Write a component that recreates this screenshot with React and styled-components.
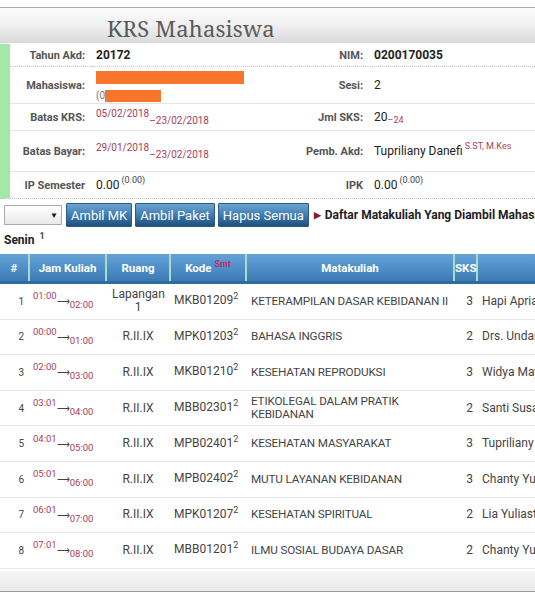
import React from "react";
import styled, { createGlobalStyle } from "styled-components";

const Global = createGlobalStyle`
  html, body { margin: 0; padding: 0; background: #fff; overflow: hidden; }
  body { font-family: Roboto, "Noto Sans", Arial, sans-serif; color: #333; width: 535px; }
`;

const Page = styled.div`
  width: 535px;
  height: 592px;
  overflow: hidden;
  display: flex;
  flex-direction: column;
  & > * { flex-shrink: 0; }
`;

const TitleBar = styled.div`
  margin-top: 7px;
  height: 35px;
  border-top: 1px solid #a8a8a8;
  background: linear-gradient(#fbfbfb 0%, #f1f1f1 45%, #dadada 100%);
  display: flex;
  align-items: center;
  padding-left: 107px;
`;

const Title = styled.h1`
  margin: 0;
  font-family: "Noto Serif", "DejaVu Serif", "Liberation Serif", serif;
  font-weight: 400;
  font-size: 22px;
  color: #5a5a5a;
  letter-spacing: 0.2px;
  position: relative;
  top: 2px;
`;

const Info = styled.div`
  margin-top: 1px;
  border-left: 10px solid #a3e8a6;
  display: grid;
  grid-template-columns: 82px 198px 80px 1fr;
  border-bottom: 1px dotted #bbb;
`;

const Label = styled.div`
  height: ${(p) => p.h}px;
  box-sizing: border-box;
  display: flex;
  align-items: center;
  justify-content: flex-end;
  padding-right: 7px;
  font-size: 11px;
  font-weight: 700;
  color: #555;
  border-bottom: ${(p) => (p.last ? "none" : p.dotted ? "1px dotted #c8c8c8" : "1px solid #e6e6e6")};
`;

const Value = styled.div`
  height: ${(p) => p.h}px;
  box-sizing: border-box;
  display: flex;
  align-items: center;
  padding-left: 4px;
  font-size: 12px;
  font-weight: ${(p) => (p.bold ? 700 : 400)};
  color: #222;
  border-bottom: ${(p) => (p.last ? "none" : p.dotted ? "1px dotted #c8c8c8" : "1px solid #e6e6e6")};
`;

const Red = styled.span`
  color: #a8405a;
  font-size: ${(p) => p.size || 10}px;
  position: relative;
  top: ${(p) => p.shift || 0}px;
`;

const Sup = styled.span`
  font-size: 9px;
  color: ${(p) => p.color || "#444"};
  position: relative;
  top: -5px;
  margin-left: ${(p) => (p.tight ? 0 : 2)}px;
`;

const Redact = styled.div`
  display: flex;
  flex-direction: column;
  gap: 6px;
  padding-top: 2px;
`;

const OrangeBar = styled.div`
  width: ${(p) => p.w}px;
  height: ${(p) => p.hh}px;
  background: #f7762c;
`;

const RedactRow = styled.div`
  display: flex;
  align-items: center;
  font-size: 10px;
  color: #777;
`;

const Toolbar = styled.div`
  margin-top: 4px;
  display: flex;
  align-items: center;
  gap: 3px;
  padding-left: 4px;
  white-space: nowrap;
  & > * { flex-shrink: 0; }
`;

const Select = styled.div`
  width: 53px;
  height: 18px;
  border: 1px solid #aaa;
  background: linear-gradient(#ffffff, #e9e9e9);
  display: flex;
  align-items: center;
  justify-content: flex-end;
  padding-right: 3px;
  font-size: 8px;
  color: #111;
  margin-right: 1px;
`;

const Button = styled.button`
  height: 24px;
  padding: 0 4px;
  border: 1px solid #2a5b85;
  background: linear-gradient(#6ea5d4 0%, #3f7db3 50%, #1f4f7c 100%);
  color: #fff;
  font-family: Roboto, Arial, sans-serif;
  font-size: 13px;
  border-radius: 1px;
`;

const ListTitle = styled.div`
  display: flex;
  align-items: center;
  gap: 4px;
  margin-left: 2px;
  font-size: 12px;
  font-weight: 700;
  color: #222;
`;

const Tri = styled.span`
  color: #8a1a2a;
  font-size: 9px;
`;

const Day = styled.div`
  margin: 6px 0 0 4px;
  height: 16px;
  font-size: 12px;
  font-weight: 700;
  color: #222;
`;

const Table = styled.table`
  margin-top: 5px;
  border-collapse: collapse;
  table-layout: fixed;
  width: 600px;
`;

const Th = styled.th`
  height: 27px;
  padding: 0;
  background: linear-gradient(#64a2d6 0%, #4b8cc6 60%, #3c79b0 100%);
  border-bottom: 3px solid #2f6b9f;
  border-left: ${(p) => (p.first ? "none" : "2px solid #a9dcc6")};
  color: #fff;
  font-size: 11.5px;
  font-weight: 700;
  text-align: center;
`;

const SmtSup = styled.span`
  font-size: 9px;
  color: #c22b6a;
  position: relative;
  top: -5px;
  margin-left: 3px;
`;

const Td = styled.td`
  height: 34.6px;
  padding: 0 ${(p) => p.pr || 0}px 0 ${(p) => p.pl || 0}px;
  border-bottom: 1px solid #e8e8e8;
  font-size: ${(p) => p.fs || 12}px;
  letter-spacing: ${(p) => (p.tightText ? "-0.15px" : "normal")};
  color: #444;
  text-align: ${(p) => p.align || "left"};
  line-height: 13px;
  white-space: ${(p) => (p.nowrap ? "nowrap" : "normal")};
  overflow: hidden;
`;

const Time = styled.span`
  color: #a8405a;
  font-size: 9.5px;
  position: relative;
  top: ${(p) => (p.low ? 4 : -5)}px;
`;

const Arrow = styled.span`
  color: #444;
  font-size: 9px;
`;

const Footer = styled.div`
  margin-top: 2px;
  height: 20px;
  background: linear-gradient(#f6f6f6, #eaeaea);
  border-bottom: 1px solid #9a9a9a;
`;

const rows = [
  ["1", "01:00", "02:00", "Lapangan 1", "MKB01209", "KETERAMPILAN DASAR KEBIDANAN II", "3", "Hapi Apriasari"],
  ["2", "00:00", "01:00", "R.II.IX", "MPK01203", "BAHASA INGGRIS", "2", "Drs. Undang"],
  ["3", "02:00", "03:00", "R.II.IX", "MKB01210", "KESEHATAN REPRODUKSI", "3", "Widya Mayasari"],
  ["4", "03:01", "04:00", "R.II.IX", "MBB02301", "ETIKOLEGAL DALAM PRATIK KEBIDANAN", "2", "Santi Susanti"],
  ["5", "04:01", "05:00", "R.II.IX", "MPB02401", "KESEHATAN MASYARAKAT", "3", "Tupriliany Danefi"],
  ["6", "05:01", "06:00", "R.II.IX", "MPB02402", "MUTU LAYANAN KEBIDANAN", "3", "Chanty Yunie"],
  ["7", "06:01", "07:00", "R.II.IX", "MPK01207", "KESEHATAN SPIRITUAL", "2", "Lia Yuliastuti"],
  ["8", "07:01", "08:00", "R.II.IX", "MBB01201", "ILMU SOSIAL BUDAYA DASAR", "2", "Chanty Yunie"],
];

export default function App() {
  return (
    <Page>
      <Global />
      <TitleBar>
        <Title>KRS Mahasiswa</Title>
      </TitleBar>
      <Info>
        <Label h={23} dotted>Tahun Akd:</Label>
        <Value h={23} bold dotted>20172</Value>
        <Label h={23} dotted>NIM:</Label>
        <Value h={23} bold dotted>0200170035</Value>

        <Label h={37}>Mahasiswa:</Label>
        <Value h={37}>
          <Redact>
            <OrangeBar w={148} hh={13} />
            <RedactRow>
              (0
              <OrangeBar w={56} hh={12} />
            </RedactRow>
          </Redact>
        </Value>
        <Label h={37}>Sesi:</Label>
        <Value h={37}>2</Value>

        <Label h={27}>Batas KRS:</Label>
        <Value h={27}>
          <Red shift={-4}>05/02/2018</Red>
          <Red shift={3}>–23/02/2018</Red>
        </Value>
        <Label h={27}>Jml SKS:</Label>
        <Value h={27}>
          20<Red size={9} shift={3}>–24</Red>
        </Value>

        <Label h={41}>Batas Bayar:</Label>
        <Value h={41}>
          <Red shift={-4}>29/01/2018</Red>
          <Red shift={3}>–23/02/2018</Red>
        </Value>
        <Label h={41}>Pemb. Akd:</Label>
        <Value h={41}>
          Tupriliany Danefi<Sup color="#a8405a">S.ST, M.Kes</Sup>
        </Value>

        <Label h={26} last>IP Semester</Label>
        <Value h={26} last>
          0.00<Sup>(0.00)</Sup>
        </Value>
        <Label h={26} last>IPK</Label>
        <Value h={26} last>
          0.00<Sup>(0.00)</Sup>
        </Value>
      </Info>

      <Toolbar>
        <Select>▼</Select>
        <Button>Ambil MK</Button>
        <Button>Ambil Paket</Button>
        <Button>Hapus Semua</Button>
        <ListTitle>
          <Tri>▶</Tri>Daftar Matakuliah Yang Diambil Mahasiswa
        </ListTitle>
      </Toolbar>

      <Day>
        Senin <Sup>1</Sup>
      </Day>

      <Table>
        <colgroup>
          <col style={{ width: 29 }} />
          <col style={{ width: 77 }} />
          <col style={{ width: 64 }} />
          <col style={{ width: 76 }} />
          <col style={{ width: 208 }} />
          <col style={{ width: 23 }} />
          <col style={{ width: 123 }} />
        </colgroup>
        <thead>
          <tr>
            <Th first>#</Th>
            <Th>Jam Kuliah</Th>
            <Th>Ruang</Th>
            <Th>
              Kode<SmtSup>Smt</SmtSup>
            </Th>
            <Th>Matakuliah</Th>
            <Th>SKS</Th>
            <Th></Th>
          </tr>
        </thead>
        <tbody>
          {rows.map((r) => (
            <tr key={r[0]}>
              <Td align="right" pr={5} fs={10}>{r[0]}</Td>
              <Td pl={4} nowrap>
                <Time>{r[1]}</Time>
                <Arrow>⟶</Arrow>
                <Time low>{r[2]}</Time>
              </Td>
              <Td align="center" pl={6} pr={6}>{r[3]}</Td>
              <Td pl={4}>
                {r[4]}
                <Sup tight>2</Sup>
              </Td>
              <Td pl={5} pr={0} fs={11.7} tightText>{r[5]}</Td>
              <Td align="right" pr={4}>{r[6]}</Td>
              <Td pl={5} nowrap>{r[7]}</Td>
            </tr>
          ))}
        </tbody>
      </Table>
      <Footer />
    </Page>
  );
}
